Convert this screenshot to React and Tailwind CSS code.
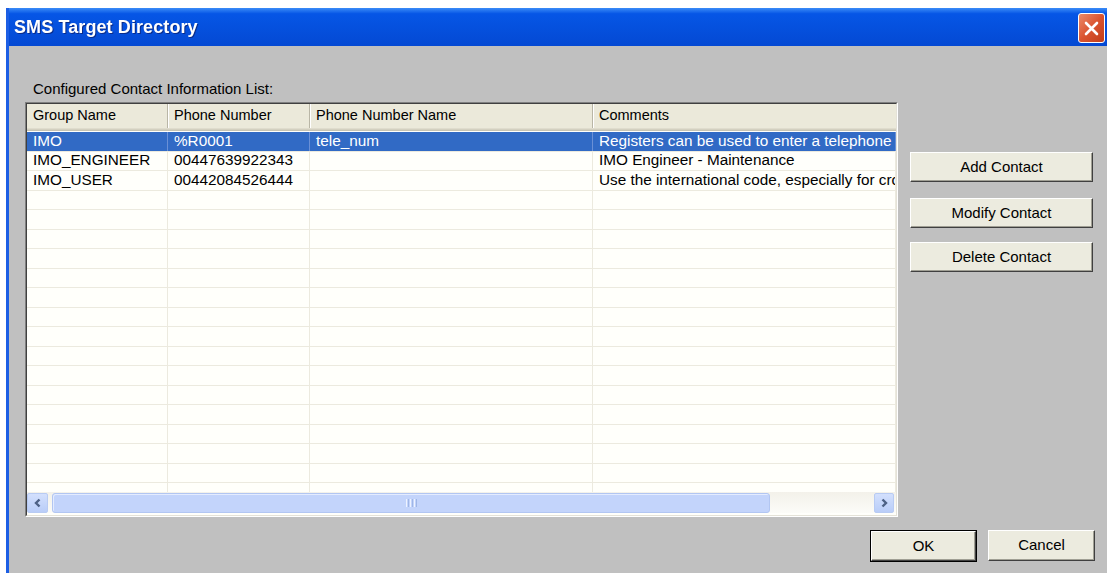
import React from "react";

const rows = [
  { g: "IMO", p: "%R0001", n: "tele_num", c: "Registers can be used to enter a telephone number", sel: true },
  { g: "IMO_ENGINEER", p: "00447639922343", n: "", c: "IMO Engineer - Maintenance" },
  { g: "IMO_USER", p: "00442084526444", n: "", c: "Use the international code, especially for cross" },
];

const emptyRows = Array.from({ length: 16 }, (_, i) => i);

function CloseButton() {
  return (
    <div className="w-[27px] h-[30px] mr-[2px] mt-[2px] rounded-[3px] border border-white bg-linear-to-br from-[#ec8a68] via-[#da5430] to-[#c13d1a] flex items-center justify-center">
      <svg width="15" height="15" viewBox="0 0 15 15">
        <path d="M2 2L13 13M13 2L2 13" stroke="white" strokeWidth="2.6" strokeLinecap="round" />
      </svg>
    </div>
  );
}

function Btn({ children, className = "" }) {
  return (
    <div
      className={
        "h-[30px] bg-[#ecebdf] border border-t-white border-l-white border-r-[#404040] border-b-[#404040] shadow-[inset_-1px_-1px_0_#a09f94] text-[15px] text-black flex items-center justify-center " +
        className
      }
    >
      {children}
    </div>
  );
}

function HeaderCell({ children, last }) {
  return (
    <div
      className={
        "flex items-center pl-[6px] text-[14.5px] text-black whitespace-nowrap overflow-hidden " +
        (last ? "" : "border-r border-[#b9b6a6] shadow-[1px_0_0_#ffffff]")
      }
    >
      {children}
    </div>
  );
}

function Cell({ children, sel }) {
  return (
    <div
      className={
        "flex items-center pl-[6px] text-[15.3px] whitespace-nowrap overflow-hidden border-r " +
        (sel ? "border-[#6a90d6] text-white" : "border-[#eceadf] text-black")
      }
    >
      {children}
    </div>
  );
}

function Chevron({ dir }) {
  return (
    <svg width="9" height="10" viewBox="0 0 9 10">
      <path
        d={dir === "left" ? "M6.5 1.5L3 5L6.5 8.5" : "M2.5 1.5L6 5L2.5 8.5"}
        fill="none"
        stroke="#4d6185"
        strokeWidth="2.4"
      />
    </svg>
  );
}

function ScrollBar() {
  return (
    <div className="h-[21px] flex items-center bg-linear-to-b from-[#f3f1ea] to-[#fcfcf8] pr-[2px]">
      <div className="w-[21px] h-[20px] rounded-[2px] border border-[#b8cbf3] bg-linear-to-b from-[#d3e0fd] to-[#b9cdf8] flex items-center justify-center">
        <Chevron dir="left" />
      </div>
      <div className="ml-[4px] w-[718px] h-[20px] rounded-[3px] border border-[#b2c6f2] bg-[#c3d4fb] shadow-[inset_1px_1px_0_#e4ecff] flex items-center justify-center gap-[1px]">
        <span className="w-[1px] h-[8px] bg-[#eef3ff]" />
        <span className="w-[1px] h-[8px] bg-[#9fb6e6]" />
        <span className="w-[1px] h-[8px] bg-[#eef3ff]" />
        <span className="w-[1px] h-[8px] bg-[#9fb6e6]" />
        <span className="w-[1px] h-[8px] bg-[#eef3ff]" />
        <span className="w-[1px] h-[8px] bg-[#9fb6e6]" />
      </div>
      <div className="flex-1" />
      <div className="w-[20px] h-[20px] rounded-[2px] border border-[#b8cbf3] bg-linear-to-b from-[#d3e0fd] to-[#b9cdf8] flex items-center justify-center">
        <Chevron dir="right" />
      </div>
    </div>
  );
}

function ContactTable() {
  const cols = "grid grid-cols-[141px_142px_283px_1fr]";
  return (
    <div className="w-[873px] h-[415px] border border-t-[#808080] border-l-[#808080] border-r-white border-b-white">
      <div className="h-full flex flex-col border border-t-[#404040] border-l-[#404040] border-r-[#e4e2d8] border-b-[#e4e2d8] bg-[#fffffb]">
        {/* column headers */}
        <div className={cols + " h-[27px] bg-[#ebe9da] shadow-[inset_0_-1px_0_#c7c4b4,inset_0_-2px_0_#d3d0c0,inset_0_-3px_0_#dfdccd] pb-[3px]"}>
          <HeaderCell>Group Name</HeaderCell>
          <HeaderCell>Phone Number</HeaderCell>
          <HeaderCell>Phone Number Name</HeaderCell>
          <HeaderCell last>Comments</HeaderCell>
        </div>
        {/* list rows */}
        <div className="h-[361px] overflow-hidden pt-[1px]">
          {rows.map((r) => (
            <div
              key={r.g}
              className={cols + " h-[19.5px] border-b " + (r.sel ? "bg-[#316ac5] border-[#eceadf]" : "border-[#eceadf]")}
            >
              <Cell sel={r.sel}>{r.g}</Cell>
              <Cell sel={r.sel}>{r.p}</Cell>
              <Cell sel={r.sel}>{r.n}</Cell>
              <Cell sel={r.sel}>{r.c}</Cell>
            </div>
          ))}
          {emptyRows.map((i) => (
            <div key={i} className={cols + " h-[19.5px] border-b border-[#eceadf]"}>
              <Cell />
              <Cell />
              <Cell />
              <Cell />
            </div>
          ))}
        </div>
        <ScrollBar />
      </div>
    </div>
  );
}

export default function App() {
  return (
    <div className="w-[1107px] h-[573px] bg-white pt-[8px] pl-[6px] overflow-hidden font-['Liberation_Sans',Arial,sans-serif]">
      <div className="h-full flex flex-col border-l-[3px] border-[#1c5ee4]">
        {/* title bar */}
        <div className="h-[38px] flex items-center justify-between pl-[5px] bg-linear-to-b from-[#3a8bf7] from-0% via-[#0656e6] via-15% to-[#0449d3] to-100%">
          <span className="text-white font-bold text-[18px] tracking-[0.1px] mt-[1px] drop-shadow-[1px_1px_0_#0a2c8a]">
            SMS Target Directory
          </span>
          <CloseButton />
        </div>
        {/* dialog body */}
        <div className="flex-1 bg-[#c0c0c0] pl-[16px] pr-[12px] pt-[35px] flex flex-col">
          <div className="text-[15px] leading-[16px] pl-[8px] text-black">Configured Contact Information List:</div>
          <div className="flex mt-[5px]">
            <ContactTable />
            <div className="flex flex-col ml-[12px] pt-[50px] w-[183px]">
              <Btn>Add Contact</Btn>
              <Btn className="mt-[16px]">Modify Contact</Btn>
              <Btn className="mt-[14px]">Delete Contact</Btn>
            </div>
          </div>
          <div className="flex justify-end gap-[11px] mt-[13px]">
            <div className="w-[107px] h-[32px] border border-black">
              <Btn className="h-full">OK</Btn>
            </div>
            <Btn className="w-[107px] h-[31px]">Cancel</Btn>
          </div>
        </div>
      </div>
    </div>
  );
}
